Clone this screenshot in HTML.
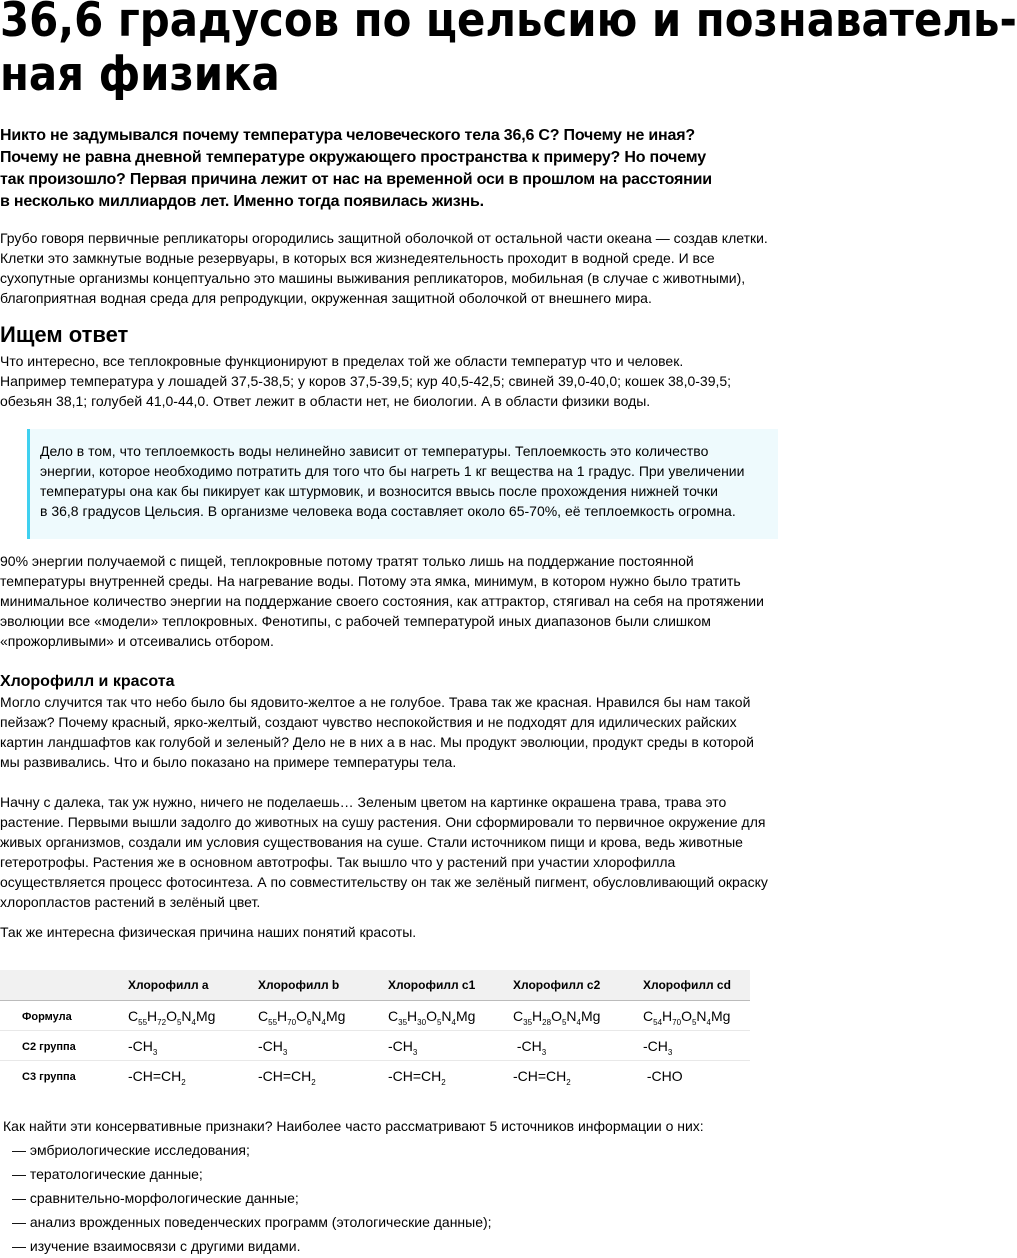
<!DOCTYPE html>
<html><head><meta charset="utf-8"><style>
body{margin:0;background:#fff;color:#000;font-family:"Liberation Sans",Arial,sans-serif;width:1017px;overflow:hidden}
h1{font-family:"DejaVu Sans Condensed","DejaVu Sans",sans-serif;font-weight:bold;font-size:47px;line-height:54px;margin:-6px 0 0 0;white-space:nowrap;transform:scaleX(0.99);transform-origin:0 0;width:1090px}
.lead{font-weight:bold;font-size:16px;line-height:22px;margin:23px 0 0 0;white-space:nowrap;letter-spacing:-0.2px}
p{font-size:14px;line-height:20px;margin:0}
h2{font-size:22px;line-height:26px;margin:14px 0 3px;font-weight:bold}
h3{font-size:16px;line-height:20px;margin:0;font-weight:bold}
blockquote{margin:18px 0 0 27px;width:738px;background:#eefafd;border-left:3px solid #3fd0ef;padding:12px 0 18px 10px;font-size:14px;line-height:20px}
table{border-collapse:collapse;margin-top:28px;width:750px;font-size:14px}
th{background:#f1f1f1;font-size:12px;font-weight:bold;height:30px;text-align:left;border-bottom:1px solid #bbb;padding:0}
td{height:29px;border-bottom:1px solid #e8e8e8;padding:0;vertical-align:middle}
td.l{font-size:11px;font-weight:bold;padding-left:22px;padding-top:3px;width:106px;height:26px}
sub{font-size:8px;vertical-align:-4px;line-height:0}
ul{list-style:none;margin:2px 0 0;padding:0;font-size:14px}
ul li{line-height:24px;padding-left:12px}
</style></head><body>
<h1>36,6 градусов по цельсию и познаватель-<br>ная физика</h1>
<div class="lead">Никто не задумывался почему температура человеческого тела 36,6 С? Почему не иная?<br>Почему не равна дневной температуре окружающего пространства к примеру? Но почему<br>так произошло? Первая причина лежит от нас на временной оси в прошлом на расстоянии<br>в несколько миллиардов лет. Именно тогда появилась жизнь.</div>
<p style="margin-top:15px;white-space:nowrap">Грубо говоря первичные репликаторы огородились защитной оболочкой от остальной части океана — создав клетки.<br>Клетки это замкнутые водные резервуары, в которых вся жизнедеятельность проходит в водной среде. И все<br>сухопутные организмы концептуально это машины выживания репликаторов, мобильная (в случае с животными),<br>благоприятная водная среда для репродукции, окруженная защитной оболочкой от внешнего мира.</p>
<h2>Ищем ответ</h2>
<p style="white-space:nowrap">Что интересно, все теплокровные функционируют в пределах той же области температур что и человек.<br>Например температура у лошадей 37,5-38,5; у коров 37,5-39,5; кур 40,5-42,5; свиней 39,0-40,0; кошек 38,0-39,5;<br>обезьян 38,1; голубей 41,0-44,0. Ответ лежит в области нет, не биологии. А в области физики воды.</p>
<blockquote style="white-space:nowrap">Дело в том, что теплоемкость воды нелинейно зависит от температуры. Теплоемкость это количество<br>энергии, которое необходимо потратить для того что бы нагреть 1 кг вещества на 1 градус. При увеличении<br>температуры она как бы пикирует как штурмовик, и возносится ввысь после прохождения нижней точки<br>в 36,8 градусов Цельсия. В организме человека вода составляет около 65-70%, её теплоемкость огромна.</blockquote>
<p style="margin-top:12px;white-space:nowrap">90% энергии получаемой с пищей, теплокровные потому тратят только лишь на поддержание постоянной<br>температуры внутренней среды. На нагревание воды. Потому эта ямка, минимум, в котором нужно было тратить<br>минимальное количество энергии на поддержание своего состояния, как аттрактор, стягивал на себя на протяжении<br>эволюции все «модели» теплокровных. Фенотипы, с рабочей температурой иных диапазонов были слишком<br>«прожорливыми» и отсеивались отбором.</p>
<h3 style="margin-top:21px">Хлорофилл и красота</h3>
<p style="white-space:nowrap">Могло случится так что небо было бы ядовито-желтое а не голубое. Трава так же красная. Нравился бы нам такой<br>пейзаж? Почему красный, ярко-желтый, создают чувство неспокойствия и не подходят для идилических райских<br>картин ландшафтов как голубой и зеленый? Дело не в них а в нас. Мы продукт эволюции, продукт среды в которой<br>мы развивались. Что и было показано на примере температуры тела.</p>
<p style="margin-top:20px;white-space:nowrap">Начну с далека, так уж нужно, ничего не поделаешь… Зеленым цветом на картинке окрашена трава, трава это<br>растение. Первыми вышли задолго до животных на сушу растения. Они сформировали то первичное окружение для<br>живых организмов, создали им условия существования на суше. Стали источником пищи и крова, ведь животные<br>гетеротрофы. Растения же в основном автотрофы. Так вышло что у растений при участии хлорофилла<br>осуществляется процесс фотосинтеза. А по совместительству он так же зелёный пигмент, обусловливающий окраску<br>хлоропластов растений в зелёный цвет.</p>
<p style="margin-top:10px">Так же интересна физическая причина наших понятий красоты.</p>
<table>
<tr><th style="width:128px"></th><th style="width:130px">Хлорофилл a</th><th style="width:130px">Хлорофилл b</th><th style="width:125px">Хлорофилл c1</th><th style="width:130px">Хлорофилл c2</th><th>Хлорофилл cd</th></tr>
<tr><td class="l">Формула</td><td>C<sub>55</sub>H<sub>72</sub>O<sub>5</sub>N<sub>4</sub>Mg</td><td>C<sub>55</sub>H<sub>70</sub>O<sub>6</sub>N<sub>4</sub>Mg</td><td>C<sub>35</sub>H<sub>30</sub>O<sub>5</sub>N<sub>4</sub>Mg</td><td>C<sub>35</sub>H<sub>28</sub>O<sub>5</sub>N<sub>4</sub>Mg</td><td>C<sub>54</sub>H<sub>70</sub>O<sub>5</sub>N<sub>4</sub>Mg</td></tr>
<tr><td class="l">C2 группа</td><td style="padding-left:0">-CH<sub>3</sub></td><td>-CH<sub>3</sub></td><td>-CH<sub>3</sub></td><td>&nbsp;-CH<sub>3</sub></td><td>-CH<sub>3</sub></td></tr>
<tr><td class="l" style="border:0">C3 группа</td><td style="border:0">-CH=CH<sub>2</sub></td><td style="border:0">-CH=CH<sub>2</sub></td><td style="border:0">-CH=CH<sub>2</sub></td><td style="border:0">-CH=CH<sub>2</sub></td><td style="border:0">&nbsp;-CHO</td></tr>
</table>
<p style="margin-top:26px;padding-left:3px">Как найти эти консервативные признаки? Наиболее часто рассматривают 5 источников информации о них:</p>
<ul>
<li>— эмбриологические исследования;</li>
<li>— тератологические данные;</li>
<li>— сравнительно-морфологические данные;</li>
<li>— анализ врожденных поведенческих программ (этологические данные);</li>
<li>— изучение взаимосвязи с другими видами.</li>
</ul>
</body></html>
